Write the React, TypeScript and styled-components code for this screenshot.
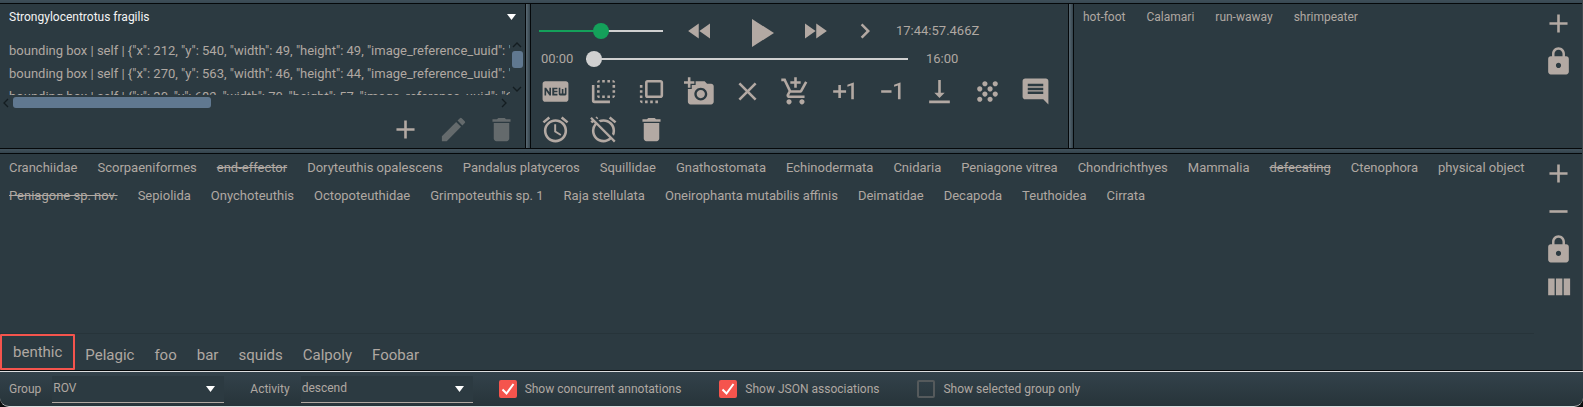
import React, { useState } from 'react';
import styled, { createGlobalStyle, css } from 'styled-components';
import {
  MdAdd,
  MdRemove,
  MdEdit,
  MdDelete,
  MdLock,
  MdFastRewind,
  MdFastForward,
  MdPlayArrow,
  MdChevronRight,
  MdFiberNew,
  MdFlipToBack,
  MdFlipToFront,
  MdAddAPhoto,
  MdClear,
  MdAddShoppingCart,
  MdExposurePlus1,
  MdExposureNeg1,
  MdVerticalAlignBottom,
  MdGrain,
  MdComment,
  MdAlarm,
  MdAlarmOff,
} from 'react-icons/md';

const c = {
  bg: '#2c3a41',
  text: '#b0a8a2',
  icon: '#b3a9a3',
  disabled: '#646a6c',
  line: '#05080a',
  thumb: '#607890',
  accent: '#f5544d',
  green: '#14a05a',
  track: '#d0d0d0',
};

const GlobalStyle = createGlobalStyle`
  *, *::before, *::after { box-sizing: border-box; }
  body {
    margin: 0;
    background: #0b0d0e;
    color: ${c.text};
    font: 13px/16px Roboto, "Liberation Sans", sans-serif;
  }
  button, input, select { font: inherit; color: inherit; margin: 0; }
`;

const Page = styled.div`
  display: flex;
  flex-direction: column;
  min-height: 100vh;
`;

const Workspace = styled.main`
  flex: 1;
  display: flex;
  flex-direction: column;
  background: ${c.bg};
  border-right: 1px solid #3f494e;
  border-bottom: 1px solid ${c.line};
`;

const TopEdge = styled.div`
  height: 4px;
  background: linear-gradient(#3e4e58, #384852);
  border-bottom: 1px solid ${c.line};
`;

const RowDivider = styled.div`
  height: 6px;
  background: linear-gradient(#42525c, #34434c);
  border: solid ${c.line};
  border-width: 1px 0;
`;

const ColumnDivider = styled.div`
  width: 6px;
  background: linear-gradient(90deg, #5a6a74, #34434c);
  border: solid ${c.line};
  border-width: 0 1px;
`;

const TopPanels = styled.div`
  display: grid;
  grid-template-columns: minmax(0, 525fr) auto minmax(0, 537fr) auto minmax(0, 508fr);
`;

const Panel = styled.section`
  display: flex;
  flex-direction: column;
  min-width: 0;
`;

const SidePanel = styled.section`
  display: flex;
  min-width: 0;
`;

const IconButton = styled.button`
  display: flex;
  align-items: center;
  justify-content: center;
  width: 48px;
  height: 38px;
  padding: 0;
  border: 0;
  background: none;
  color: ${c.icon};
  &:disabled { color: ${c.disabled}; }
  svg { display: block; flex: none; }
`;

const IconColumn = styled.div`
  display: flex;
  flex-direction: column;
  flex: none;
`;

/* Drop-downs */

const SelectBox = styled.div<{ $kind: 'concept' | 'field' }>`
  display: grid;
  align-items: center;
  font-size: 12px;
  & > * { grid-area: 1 / 1; }
  & > svg { justify-self: end; pointer-events: none; }
  select {
    appearance: none;
    width: 100%;
    border: 0;
    border-radius: 0;
    background: none;
    outline: none;
  }
  ${(p) =>
    p.$kind === 'concept'
      ? css`
          color: #f4f4f4;
          select { height: 26px; padding: 0 24px 0 9px; }
          & > svg { margin-right: 9px; }
        `
      : css`
          width: 172px;
          background: ${c.bg};
          select { height: 27px; padding: 0 24px 2px 1px; border-bottom: 1px solid ${c.text}; }
          & > svg { margin-right: 9px; }
        `}
`;

const Caret = () => (
  <svg width="9" height="6" viewBox="0 0 9 6" aria-hidden="true">
    <path d="M0 0h9L4.500 6z" fill="#fff" />
  </svg>
);

/* Association list */

const ConceptBar = styled.div`
  padding-bottom: 9px;
`;

const ListArea = styled.div`
  display: grid;
  grid-template-columns: minmax(0, 1fr) 14px;
  grid-template-rows: 56px 15px;
  padding-right: 1px;
`;

const AssociationList = styled.ul`
  margin: 0;
  padding: 0 0 0 9px;
  list-style: none;
  overflow: hidden;
  white-space: nowrap;
  li { line-height: 23px; }
`;

const ScrollBar = styled.div<{ $vertical?: boolean }>`
  display: flex;
  align-items: center;
  flex-direction: ${(p) => (p.$vertical ? 'column' : 'row')};
  justify-content: space-between;
  padding: ${(p) => (p.$vertical ? '2px 0' : '0 2px')};
`;

const ScrollRail = styled.div<{ $vertical?: boolean }>`
  flex: 1;
  display: flex;
  padding: ${(p) => (p.$vertical ? '2px 0' : '0 3px')};
`;

const ScrollThumb = styled.div<{ $vertical?: boolean }>`
  width: ${(p) => (p.$vertical ? '11px' : '41%')};
  height: ${(p) => (p.$vertical ? '17px' : '11px')};
  border-radius: 3px;
  background: ${c.thumb};
`;

const arrows = {
  up: 'M1 6l4-4 4 4',
  down: 'M1 2l4 4 4-4',
  left: 'M6 1L2 5l4 4',
  right: 'M2 1l4 4-4 4',
};

const ScrollArrow = ({ dir }: { dir: keyof typeof arrows }) => {
  const tall = dir === 'left' || dir === 'right';
  return (
    <svg width={tall ? 8 : 10} height={tall ? 10 : 8} aria-hidden="true">
      <path d={arrows[dir]} fill="none" stroke="#141d21" strokeWidth="1.300" />
    </svg>
  );
};

const EditBar = styled.div`
  display: flex;
  justify-content: flex-end;
`;

/* Player */

const Range = styled.input<{ $knob: string; $fill: string; $at: number }>`
  appearance: none;
  display: block;
  width: 100%;
  height: 16px;
  background: none;
  outline: none;
  &::-webkit-slider-runnable-track {
    height: 2px;
    background: linear-gradient(90deg, ${(p) => p.$fill} ${(p) => p.$at}%, ${c.track} ${(p) => p.$at}%);
  }
  &::-webkit-slider-thumb {
    appearance: none;
    width: 16px;
    height: 16px;
    margin-top: -7px;
    border-radius: 50%;
    background: ${(p) => p.$knob};
  }
`;

const Transport = styled.div`
  display: grid;
  grid-template-columns: 124px 74px 46px 64px 36px auto;
  align-items: center;
  justify-items: center;
  justify-content: start;
  height: 40px;
  margin-top: 7px;
  padding-left: 8px;
`;

const TransportButton = styled(IconButton)<{ $large?: boolean }>`
  width: 36px;
  ${(p) => p.$large && 'padding-top: 4px;'}
`;

const Timestamp = styled.time`
  padding-left: 13px;
`;

const Timeline = styled.div`
  display: grid;
  grid-template-columns: 45px minmax(0, 1fr) 142px;
  align-items: center;
  height: 16px;
  margin-bottom: 5px;
  padding: 0 18px 0 10px;
`;

const Duration = styled.span`
  padding-left: 18px;
`;

const Tools = styled.div`
  display: flex;
  flex-wrap: wrap;
`;

/* Concept buttons */

const Concept = styled.button<{ $struck?: boolean }>`
  height: 28px;
  padding: 0;
  border: 0;
  background: none;
  white-space: nowrap;
  text-decoration: ${(p) => (p.$struck ? 'line-through' : 'none')};
`;

const ConceptFlow = styled.div<{ $compact?: boolean }>`
  flex: 1;
  display: flex;
  flex-wrap: wrap;
  align-content: flex-start;
  column-gap: 20px;
  padding-left: 9px;
  ${(p) =>
    p.$compact &&
    css`
      column-gap: 21px;
      font-size: 12px;
      ${Concept} { height: 26px; }
    `}
`;

const Bench = styled.section`
  flex: 1;
  display: flex;
`;

const BenchMain = styled.div`
  flex: 1;
  min-width: 0;
  display: flex;
  flex-direction: column;
`;

const Tabs = styled.div`
  display: flex;
  height: 37px;
  border-top: 1px solid #27343a;
`;

const Tab = styled.button`
  padding: 5px 10px 0;
  border: 0;
  background: none;
  font-size: 15px;
  &[aria-selected='true'] {
    padding: 0 11px;
    border: 2px solid ${c.accent};
    border-radius: 1px;
  }
`;

/* Status bar */

const StatusBar = styled.footer`
  display: flex;
  align-items: center;
  gap: 26px;
  height: 36px;
  padding: 0 9px;
  border: solid #dcdedf;
  border-width: 1px 0;
  border-radius: 0 0 9px 9px;
  background: linear-gradient(#33424b, #27343a);
  font-size: 12px;
`;

const Field = styled.label`
  display: flex;
  align-items: center;
  gap: 11px;
`;

const Checks = styled.div`
  display: flex;
  gap: 38px;
`;

const Check = styled.label`
  display: flex;
  align-items: center;
  gap: 8px;
`;

const Tick = styled.span`
  display: grid;
  place-items: center;
  & > * { grid-area: 1 / 1; }
  svg { pointer-events: none; visibility: hidden; }
  input {
    appearance: none;
    width: 18px;
    height: 18px;
    border: 2px solid #555a5c;
    border-radius: 2px;
  }
  input:checked { border-color: ${c.accent}; background: ${c.accent}; }
  input:checked + svg { visibility: visible; }
`;

const associations = [
  'bounding box | self | {"x": 212, "y": 540, "width": 49, "height": 49, "image_reference_uuid": "6',
  'bounding box | self | {"x": 270, "y": 563, "width": 46, "height": 44, "image_reference_uuid": "6',
  'bounding box | self | {"x": 30, "y": 682, "width": 70, "height": 57, "image_reference_uuid": "68',
];

const tools = [
  ['New annotation', MdFiberNew],
  ['Flip to back', MdFlipToBack],
  ['Flip to front', MdFlipToFront],
  ['Capture frame', MdAddAPhoto],
  ['Clear', MdClear],
  ['Add sample', MdAddShoppingCart],
  ['Plus one', MdExposurePlus1],
  ['Minus one', MdExposureNeg1],
  ['On bottom', MdVerticalAlignBottom],
  ['Population', MdGrain],
  ['Comment', MdComment],
  ['Start duration', MdAlarm],
  ['Clear duration', MdAlarmOff],
  ['Delete', MdDelete],
] as const;

const quick = ['hot-foot', 'Calamari', 'run-waway', 'shrimpeater'];

const concepts = [
  'Cranchiidae', 'Scorpaeniformes', 'end-effector', 'Doryteuthis opalescens', 'Pandalus platyceros',
  'Squillidae', 'Gnathostomata', 'Echinodermata', 'Cnidaria', 'Peniagone vitrea', 'Chondrichthyes',
  'Mammalia', 'defecating', 'Ctenophora', 'physical object', 'Peniagone sp. nov.', 'Sepiolida',
  'Onychoteuthis', 'Octopoteuthidae', 'Grimpoteuthis sp. 1', 'Raja stellulata',
  'Oneirophanta mutabilis affinis', 'Deimatidae', 'Decapoda', 'Teuthoidea', 'Cirrata',
];
const struck = new Set(['end-effector', 'defecating', 'Peniagone sp. nov.']);

const tabs = ['benthic', 'Pelagic', 'foo', 'bar', 'squids', 'Calpoly', 'Foobar'];

const ColumnsIcon = () => (
  <svg width="31" height="31" viewBox="0 0 24 24" fill="currentColor" aria-hidden="true">
    <path d="M10 18h5V5h-5v13zm-6 0h5V5H4v13zM16 5v13h5V5h-5z" />
  </svg>
);

function CheckField({ label, initial }: { label: string; initial: boolean }) {
  return (
    <Check>
      <Tick>
        <input type="checkbox" defaultChecked={initial} />
        <svg width="14" height="14" viewBox="0 0 14 14" aria-hidden="true">
          <path d="M1.500 7.500l4 4L12.500 2" fill="none" stroke="#fff" strokeWidth="2" />
        </svg>
      </Tick>
      {label}
    </Check>
  );
}

export default function App() {
  const [active, setActive] = useState('benthic');
  const [volume, setVolume] = useState(50);
  return (
    <Page>
      <GlobalStyle />
      <Workspace>
        <TopEdge />
        <TopPanels>
          <Panel>
            <ConceptBar>
              <SelectBox $kind="concept">
                <select aria-label="Concept">
                  <option>Strongylocentrotus fragilis</option>
                </select>
                <Caret />
              </SelectBox>
            </ConceptBar>
            <ListArea>
              <AssociationList>
                {associations.map((a) => (
                  <li key={a}>{a}</li>
                ))}
              </AssociationList>
              <ScrollBar $vertical>
                <ScrollArrow dir="up" />
                <ScrollRail $vertical>
                  <ScrollThumb $vertical />
                </ScrollRail>
                <ScrollArrow dir="down" />
              </ScrollBar>
              <ScrollBar>
                <ScrollArrow dir="left" />
                <ScrollRail>
                  <ScrollThumb />
                </ScrollRail>
                <ScrollArrow dir="right" />
              </ScrollBar>
            </ListArea>
            <EditBar>
              <IconButton aria-label="Add association"><MdAdd size={31} /></IconButton>
              <IconButton aria-label="Edit association" disabled><MdEdit size={31} /></IconButton>
              <IconButton aria-label="Delete association" disabled><MdDelete size={31} /></IconButton>
            </EditBar>
          </Panel>
          <ColumnDivider />
          <Panel>
            <Transport>
              <Range
                type="range"
                aria-label="Speed"
                value={volume}
                onChange={(e) => setVolume(Number(e.target.value))}
                $knob={c.green}
                $fill={c.green}
                $at={volume}
              />
              <TransportButton aria-label="Rewind"><MdFastRewind size={30} /></TransportButton>
              <TransportButton aria-label="Play" $large><MdPlayArrow size={48} /></TransportButton>
              <TransportButton aria-label="Fast forward"><MdFastForward size={30} /></TransportButton>
              <TransportButton aria-label="Next frame"><MdChevronRight size={30} /></TransportButton>
              <Timestamp>17:44:57.466Z</Timestamp>
            </Transport>
            <Timeline>
              <span>00:00</span>
              <Range type="range" aria-label="Position" defaultValue={0} $knob={c.track} $fill={c.track} $at={0} />
              <Duration>16:00</Duration>
            </Timeline>
            <Tools>
              {tools.map(([label, Icon]) => (
                <IconButton key={label} aria-label={label}><Icon size={31} /></IconButton>
              ))}
            </Tools>
          </Panel>
          <ColumnDivider />
          <SidePanel>
            <ConceptFlow $compact>
              {quick.map((q) => (
                <Concept key={q}>{q}</Concept>
              ))}
            </ConceptFlow>
            <IconColumn>
              <IconButton aria-label="Add button"><MdAdd size={31} /></IconButton>
              <IconButton aria-label="Lock buttons"><MdLock size={31} /></IconButton>
            </IconColumn>
          </SidePanel>
        </TopPanels>
        <RowDivider />
        <Bench>
          <BenchMain>
            <ConceptFlow>
              {concepts.map((n) => (
                <Concept key={n} $struck={struck.has(n)}>{n}</Concept>
              ))}
            </ConceptFlow>
            <Tabs role="tablist">
              {tabs.map((t) => (
                <Tab key={t} role="tab" aria-selected={t === active} onClick={() => setActive(t)}>{t}</Tab>
              ))}
            </Tabs>
          </BenchMain>
          <IconColumn>
            <IconButton aria-label="Add concept"><MdAdd size={31} /></IconButton>
            <IconButton aria-label="Remove concept"><MdRemove size={31} /></IconButton>
            <IconButton aria-label="Lock concepts"><MdLock size={31} /></IconButton>
            <IconButton aria-label="Columns"><ColumnsIcon /></IconButton>
          </IconColumn>
        </Bench>
      </Workspace>
      <StatusBar>
        <Field>
          Group
          <SelectBox $kind="field">
            <select><option>ROV</option></select>
            <Caret />
          </SelectBox>
        </Field>
        <Field>
          Activity
          <SelectBox $kind="field">
            <select><option>descend</option></select>
            <Caret />
          </SelectBox>
        </Field>
        <Checks>
          <CheckField label="Show concurrent annotations" initial />
          <CheckField label="Show JSON associations" initial />
          <CheckField label="Show selected group only" initial={false} />
        </Checks>
      </StatusBar>
    </Page>
  );
}
